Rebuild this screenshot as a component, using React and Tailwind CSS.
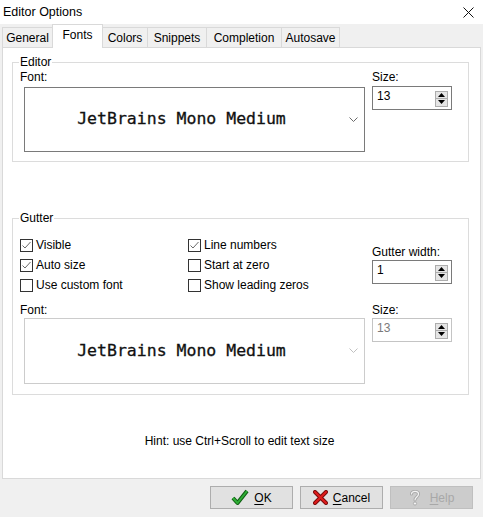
import React from 'react';

const ui = { fontFamily: '"Liberation Sans", Arial, sans-serif' };
const mono = { fontFamily: '"DejaVu Sans Mono", "Liberation Mono", monospace' };

const tabs = [
  { name: 'General', w: 'w-[51px]' },
  { name: 'Fonts', w: 'w-[51px]', active: true },
  { name: 'Colors', w: 'w-[46px]' },
  { name: 'Snippets', w: 'w-[60px]' },
  { name: 'Completion', w: 'w-[76px]' },
  { name: 'Autosave', w: 'w-[59px]' },
];

function GroupBox({ label, className, children }) {
  return (
    <div className={`relative border border-[#dcdcdc] ml-[9px] w-[457px] ${className}`}>
      <span className="absolute left-[6px] top-[-8px] bg-white px-[1px] leading-[14px] text-black">
        {label}
      </span>
      {children}
    </div>
  );
}

function Spin({ value, disabled }) {
  return (
    <div
      className={`flex h-[24px] w-[80px] items-center justify-between border bg-white pl-[4px] pr-[3px] ${
        disabled ? 'border-[#c4c4c4] text-[#7a7a7a]' : 'border-[#7a7a7a] text-black'
      }`}
    >
      <span className="leading-[14px] mt-[-4px]">{value}</span>
      <div className="flex flex-col mb-[-1px]">
        <div className="flex h-[8px] w-[13px] items-center justify-center border border-[#adadad] bg-[#e5e5e5]">
          <svg width="7" height="4" viewBox="0 0 7 4"><polygon points="3.5,0 7,4 0,4" fill="#000" /></svg>
        </div>
        <div className="flex h-[8px] w-[13px] items-center justify-center border border-t-0 border-[#adadad] bg-[#e5e5e5]">
          <svg width="7" height="4" viewBox="0 0 7 4"><polygon points="0,0 7,0 3.5,4" fill="#000" /></svg>
        </div>
      </div>
    </div>
  );
}

function FontCombo({ disabled, h }) {
  return (
    <div
      className={`relative ml-[4px] flex w-[341px] items-center justify-center bg-white ${h} border ${
        disabled ? 'border-[#cccccc]' : 'border-[#7a7a7a]'
      }`}
    >
      <span className="text-[16.5px] text-[#111] mr-[26px] [-webkit-text-stroke:0.3px_#111]" style={mono}>
        JetBrains Mono Medium
      </span>
      <svg className="absolute right-[6px] top-[29px]" width="9" height="5" viewBox="0 0 9 5">
        <polyline points="0.5,0.5 4.5,4.5 8.5,0.5" fill="none" stroke={disabled ? '#c0c0c0' : '#6a6a6a'} strokeWidth="1" />
      </svg>
    </div>
  );
}

function Check({ label, checked }) {
  return (
    <div className="flex h-[20px] items-center gap-[3px]">
      <div className="flex h-[13px] w-[13px] items-center justify-center border border-[#333] bg-white">
        {checked && (
          <svg width="11" height="11" viewBox="0 0 11 11">
            <polyline points="1.5,5.5 4,8 9.5,2" fill="none" stroke="#6a6a6a" strokeWidth="1" />
          </svg>
        )}
      </div>
      <span className="leading-[14px]">{label}</span>
    </div>
  );
}

function Button({ icon, label, hot, disabled }) {
  return (
    <button
      className={`flex h-[23px] w-[83px] items-center justify-center gap-[5px] border ${
        disabled ? 'border-[#bfbfbf] bg-[#cccccc] text-[#a8a8a8]' : 'border-[#adadad] bg-[#e1e1e1] text-black'
      }`}
    >
      {icon}
      <span className="leading-[14px]">
        <span className="underline underline-offset-2">{hot}</span>
        {label.slice(1)}
      </span>
    </button>
  );
}

export default function App() {
  return (
    <div className="flex h-[517px] w-[483px] flex-col bg-[#f0f0f0] text-[12px] text-black" style={ui}>
      {/* Titelrad */}
      <div className="flex h-[24px] items-center justify-between bg-white pl-[3px] pr-[9px]">
        <span className="text-[12.5px]">Editor Options</span>
        <svg width="11" height="11" viewBox="0 0 11 11">
          <path d="M0.5 0.5 L10.5 10.5 M10.5 0.5 L0.5 10.5" stroke="#111" strokeWidth="1" />
        </svg>
      </div>

      {/* Flikar */}
      <div className="flex h-[23px] items-end pl-[2px]">
        {tabs.map((t) => (
          <div
            key={t.name}
            className={`-mr-px flex items-center justify-center border border-b-0 border-[#d9d9d9] ${t.w} ${
              t.active
                ? 'relative z-10 mb-[-1px] h-[24px] bg-white pb-[4px]'
                : 'h-[20px] bg-[#f0f0f0]'
            }`}
          >
            {t.name}
          </div>
        ))}
      </div>

      {/* Panel */}
      <div className="mx-[2px] flex h-[432px] flex-col border border-[#d9d9d9] bg-white">
        <GroupBox label="Editor" className="mt-[14px] h-[100px]">
          <div className="flex">
            <div className="pl-[7px]">
              <div className="mt-[7px] leading-[14px]">Font:</div>
              <div className="mt-[3px]">
                <FontCombo h="h-[65px]" />
              </div>
            </div>
            <div className="ml-[7px]">
              <div className="mt-[7px] leading-[14px]">Size:</div>
              <div className="mt-[2px]">
                <Spin value="13" />
              </div>
            </div>
          </div>
        </GroupBox>

        <GroupBox label="Gutter" className="mt-[56px] h-[177px]">
          <div className="mt-[16px] flex pl-[7px]">
            <div className="grid grid-cols-[168px_184px]">
              <Check label="Visible" checked />
              <Check label="Line numbers" checked />
              <Check label="Auto size" checked />
              <Check label="Start at zero" />
              <Check label="Use custom font" />
              <Check label="Show leading zeros" />
            </div>
            <div className="mt-[10px]">
              <div className="leading-[14px]">Gutter width:</div>
              <div className="mt-[1px]">
                <Spin value="1" />
              </div>
            </div>
          </div>
          <div className="mt-[8px] flex pl-[7px]">
            <div>
              <div className="leading-[14px]">Font:</div>
              <div className="mt-[1px]">
                <FontCombo h="h-[66px]" disabled />
              </div>
            </div>
            <div className="ml-[7px]">
              <div className="leading-[14px]">Size:</div>
              <div className="mt-[1px]">
                <Spin value="13" disabled />
              </div>
            </div>
          </div>
        </GroupBox>

        <div className="mt-[39px] text-center leading-[14px] pr-[4px]">Hint: use Ctrl+Scroll to edit text size</div>
      </div>

      {/* Knappar */}
      <div className="mt-[7px] flex justify-end gap-[7px] pr-[10px]">
        <Button
          hot="O"
          label="OK"
          icon={
            <svg width="18" height="17" viewBox="0 0 18 17">
              <polyline points="2,9 6.5,14 16,2" fill="none" stroke="#0f5e12" strokeWidth="4" strokeLinejoin="round" />
              <polyline points="2,9 6.5,14 16,2" fill="none" stroke="#2fae36" strokeWidth="2" strokeLinejoin="round" />
            </svg>
          }
        />
        <Button
          hot="C"
          label="Cancel"
          icon={
            <svg width="15" height="15" viewBox="0 0 15 15">
              <path d="M2 2 L13 13 M13 2 L2 13" stroke="#7a0a0a" strokeWidth="4" strokeLinecap="round" />
              <path d="M2 2 L13 13 M13 2 L2 13" stroke="#e01c1c" strokeWidth="2" strokeLinecap="round" />
            </svg>
          }
        />
        <Button
          hot="H"
          label="Help"
          disabled
          icon={
            <svg width="12" height="17" viewBox="0 0 12 17" className="mr-[4px]">
              <path d="M2.5 5 C2.5 1.5, 9.5 1.5, 9.5 5 C9.5 8, 6 8, 6 11" fill="none" stroke="#a8a8a8" strokeWidth="3" strokeLinecap="round" />
              <path d="M2.5 5 C2.5 1.5, 9.5 1.5, 9.5 5 C9.5 8, 6 8, 6 11" fill="none" stroke="#f4f4f4" strokeWidth="1.2" strokeLinecap="round" />
              <circle cx="6" cy="14.5" r="1.6" fill="#f4f4f4" stroke="#a8a8a8" strokeWidth="0.9" />
            </svg>
          }
        />
      </div>
    </div>
  );
}
